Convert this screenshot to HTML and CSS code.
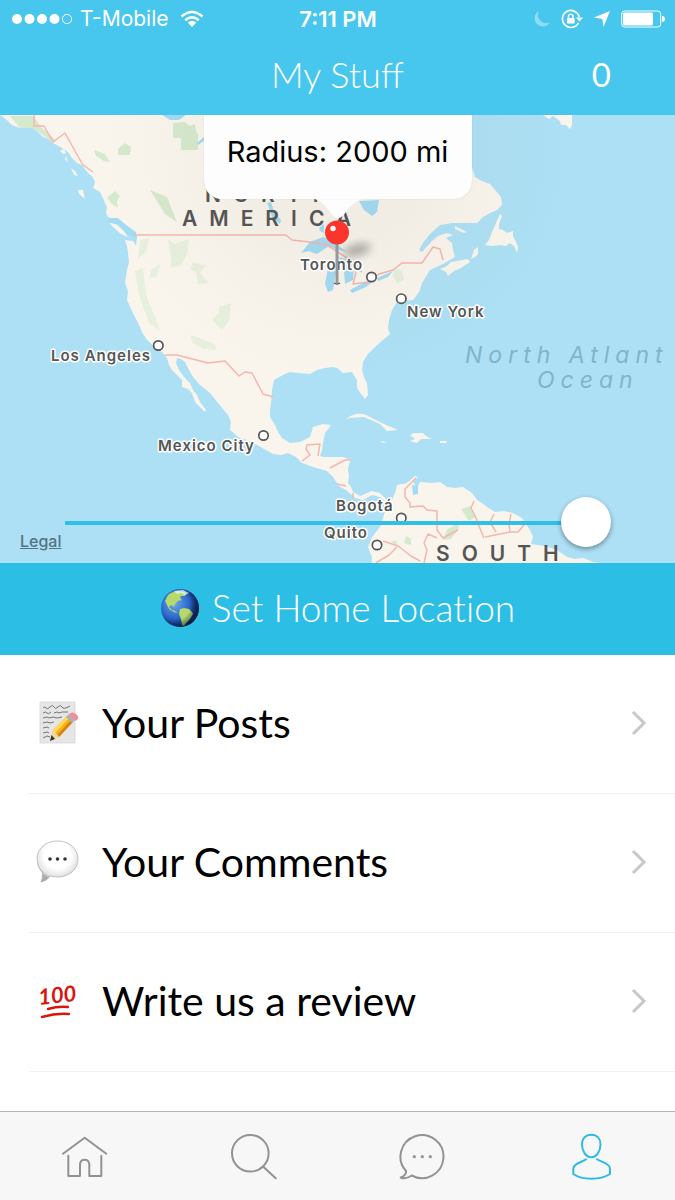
FILE: index.html
```html
<!DOCTYPE html>
<html lang="en">
<head>
<meta charset="utf-8">
<meta name="viewport" content="width=device-width, initial-scale=1">
<title>My Stuff</title>
<link rel="stylesheet" href="styles.css">
</head>
<body>
<header class="header">
  <div class="status">
    <div class="status-left">
      <svg class="signal" width="62" height="12" viewBox="0 0 62 12" aria-hidden="true">
        <g fill="#fff"><circle cx="6" cy="6" r="5"/><circle cx="18.500" cy="6" r="5"/><circle cx="31" cy="6" r="5"/><circle cx="43.500" cy="6" r="5"/></g>
        <circle cx="56" cy="6" r="4.600" fill="none" stroke="#fff"/>
      </svg>
      <span>T-Mobile</span>
      <svg class="wifi" width="24" height="18" viewBox="0 0 24 18" aria-hidden="true">
        <g fill="none" stroke="#fff" stroke-width="2.500"><path d="M1.500 6.500Q12-2.500 22.500 6.500"/><path d="M5.200 10.200Q12 4.300 18.800 10.200"/></g>
        <path fill="#fff" d="M7.700 12.600Q12 9 16.300 12.600L12 17z"/>
      </svg>
    </div>
    <span class="time">7:11 PM</span>
    <div class="status-right">
      <svg width="18" height="18" viewBox="0 0 18 18" aria-hidden="true"><path fill="#8edcf6" d="M6 1A8.200 8.200 0 1 0 17 12.200 8.200 8.200 0 0 1 6 1z"/></svg>
      <svg width="22" height="20" viewBox="0 0 22 20" aria-hidden="true">
        <path fill="none" stroke="#fff" stroke-width="1.600" d="M17.500 13.800A8.500 8.500 0 1 1 18.200 8"/>
        <path fill="#fff" d="M15 8.500h7l-3.500 4zM6 9h7.500v5.500H6z"/>
        <path fill="none" stroke="#fff" stroke-width="1.500" d="M7.500 9V7a2.300 2.300 0 0 1 4.500 0v2"/>
      </svg>
      <svg width="18" height="18" viewBox="0 0 18 18" aria-hidden="true"><path fill="#fff" d="M17 1 10.500 17 9.300 8.900 1 7.500z"/></svg>
      <svg width="44" height="18" viewBox="0 0 44 18" aria-hidden="true">
        <rect x=".7" y="1" width="39" height="16" rx="3" fill="none" stroke="#fff"/>
        <rect x="2" y="2.500" width="30" height="13" rx="1.500" fill="#fff"/><path fill="#fff" d="M41 6q3 0 3 3t-3 3z"/>
      </svg>
    </div>
  </div>
  <div class="navbar">
    <h1 class="title">My Stuff</h1>
    <span class="score">0</span>
  </div>
</header>

<main class="content">
  <section class="map" aria-label="Map">
    <svg class="map-art" viewBox="0 115 675 448">
      <defs>
        <radialGradient id="shade" gradientUnits="userSpaceOnUse" cx="338" cy="145" r="230"><stop offset=".4" stop-color="#84705c" stop-opacity=".06"/><stop offset="1" stop-color="#84705c" stop-opacity="0"/></radialGradient>
        <filter id="soft" x="-50%" y="-50%" width="200%" height="200%"><feGaussianBlur stdDeviation="4"/></filter>
      </defs>
      <rect y="115" width="675" height="448" fill="#ade0f5"/>
      <g class="land">
        <path d="M0 115L7 120 12 125 20 128 33 128 38 132 43 137 49 139 53 143 62 148 68 152 72 158 77 163 82 165 88 173 92 176 95 182 93 188 100 192 103 198 105 203 107 207 106 213 108 217 117 220 123 226 133 232 137 237 136 246 133 241 125 240 127 246 128 253 129 262 127 270 126 277 125 283 128 291 127 300 133 313 140 327 142 332 147 340 155 347 163 353 167 358 169 365 172 370 177 375 182 380 182 387 188 389 192 393 195 402 200 407 205 412 206 410 200 402 197 395 193 390 190 383 185 378 181 373 178 368 176 363 177 358 181 359 185 362 188 368 193 377 200 385 210 393 218 403 228 415 231 422 230 430 238 437 247 440 257 445 273 454 281 455 288 453 296 457 302 463 313 467 327 471 333 477 339 486 346 490 352 495 355 498 363 500 372 495 380 497 385 502 386 508 383 518 380 527 376 532 372 537 368 547 372 557 371 570 606 570 600 563 593 562 583 558 575 559 567 557 557 550 545 546 531 544 533 537 530 530 522 518 513 513 504 511 495 512 487 507 482 503 477 500 472 493 463 487 455 488 447 487 440 482 433 483 420 482 417 488 413 482 418 477 415 476 407 483 397 485 395 493 392 500 387 500 380 493 372 491 360 496 353 492 351 487 348 483 349 476 348 470 349 464 351 460 343 457 323 457 320 456 322 450 323 443 325 433 331 425 323 424 313 427 310 437 300 442 290 443 282 438 278 432 275 425 270 417 270 410 271 403 272 390 274 380 283 375 290 372 299 373 310 374 317 370 325 368 333 367 337 368 343 373 352 372 357 380 357 388 361 394 365 399 368 395 367 383 364 377 362 370 363 362 368 354 375 347 383 340 390 334 388 328 389 320 392 310 397 302 413 300 417 295 420 290 422 283 430 270 443 264 455 257 453 250 452 243 446 238 453 235 447 233 438 236 432 241 422 252 419 250 423 243 430 234 440 225 452 223 477 223 483 217 490 213 497 210 502 205 501 197 496 191 490 184 482 181 475 177 455 115z"/>
        <path d="M500 214l2 2-3 8 0 5 4 1 4 3 6-2 0 5 2 4 3 7-1 6-3-7-4-3-4 3-5-1-9 1-7-1 4-5 3-8zM440 269l7-3 4-4 6-1 11-2 2 3-9 6-7 3-6 5-2-4zM474 250l4-3 0 7-3 3-4 2zM455 226l12 6-3 1-9-4zM543 115l6 4 4-3 7 5 1 4 5 0 4 4 2-4 0-10z"/>
        <path d="M346 419q10-8 20-4l20 10 12 5-11 1-7-7-16-7-14 1zM410 435l4-2 9 0 3 3 6 3-11 0-4 4-7-2 5-2zM440 441l7 0-1 2-6 0zM380 441l7 1-4 1z"/>
        <path d="M60 151l4-2 2 4-3 1zM66 156l2 6-3-3zM71 168l4 3 3 5-4-1zM78 190l5 0 2 9-6-5zM106 219l10 5 7 6 5 7-7-3-8-7z"/>
      </g>
      <g fill="#d5e9cd">
        <path d="M10 116h23l9 12 14 12-3 3-10-8-10-7-13 0zM173 123l12-1 5 4 5-2 1 7 2 4v15h-17v-12h-8zM94 150l11 4 5 8-6-1-8-5zM118 149l7-6 6 4-1 8-12 0zM107 198l8-7 5 5-3 5 1 7-6-4zM150 190l17 7 10 25-12-8z"/>
        <path opacity=".5" d="M140 240l9-2-3 14-8 7zM168 239l7 5 6-2 8-3-2 15-6 11-10 3 0-12zM135 271l8-3 3 27 8 20 6 15-11-7-10-28zM192 262l10 3 4-1-6 9 9 10-11 1-2-12-5-2zM151 270l9-6-3 12-7 2zM219 307l12-4-2 18-7 9-10-10 7-8zM190 335l9 3 15 6 3 6-13-1-11-6zM395 268l7 3 2 9-7 3-4-7z"/>
        <path d="M461 509l9-3 5 11-6 4zM447 530l10-7 2 5-8 11-8 1zM406 536l5 3 0 6-7-2zM391 541l6 0-1 5z"/>
      </g>
      <g fill="#a2dbf5">
        <path d="M162 115h24l-7 5-9 0zM197 143l8-7 0 4-7 5zM267 203l4-1 3 10 7 8-1 4-8-7-3-9zM359 201l20-1-2 12-5 4-8-6zM301 253l9-11 13-5 9 4 15 11-12-3-6-3-12 8-9-3zM319 228l5-4 0 9-4-2zM328 268l8 4-3 18-5 2-3-8zM337 257l15 3 10 5 0 8-8-6-1 13-8 4-1-13 1-8zM350 290l15-8 10-2-9 7-14 6zM377 278l16-7-5 6-10 4zM412 485l6 1 0 8-5 1z"/>
        <path d="M108 218l10 0 8 7 10 7 1 6-10-4-8-9-12-3z"/>
      </g>
      <g class="borders">
        <path d="M34 115v11h10l9 16 12-9 10 18 8 14 10 7M134 235h152l6 5 26 3 9 2 20 13 5 9 4 5-3 12 16-2 10-8 14-4 9-7h20l11-16 7 2 3 11"/>
        <path d="M165 355h12l31 8 17-2 14 15 6-4 7 1 11 21 10 3M302 461l8-6-4-6 1-4 13-1-2 12M330 468l15-8 6 0M337 484l9 2M353 493v5"/>
        <path d="M416 478l-11 11 0 8 5 6 0 4 13-1 4 4 10 1 0 19 6 8 15-8M474 501l-3 7 5 10 3 8 5 12M494 514l-4 8 6 10M511 514l-2 10 1 8-25 5M524 525l-6 7h-8M383 541l15 5 13 10 9 5M397 547l-8 8-13 8M424 563l3-13-3-7 4-9 9 4"/>
      </g>
      <rect y="115" width="675" height="448" fill="url(#shade)"/>
      <g class="continent">
        <text x="205" y="202">NORTH</text>
        <text x="182" y="226">AMERICA</text>
        <text x="436" y="561">SOUTH</text>
      </g>
      <g class="ocean"><text x="465" y="363">North Atlant</text><text x="537" y="388">Ocean</text></g>
      <g class="city">
        <text x="300" y="270">Toronto</text><text x="407" y="317">New York</text><text x="51" y="361">Los Angeles</text><text x="158" y="451">Mexico City</text><text x="336" y="511">Bogotá</text><text x="324" y="538">Quito</text>
      </g>
      <g class="dots"><circle cx="371.500" cy="277" r="4.700"/><circle cx="401.300" cy="298.700" r="4.700"/><circle cx="158.300" cy="345.500" r="4.700"/><circle cx="263.500" cy="435.500" r="4.700"/><circle cx="401.300" cy="518" r="4.700"/><circle cx="377" cy="545" r="4.700"/></g>
      <ellipse cx="357" cy="250" rx="14" ry="6" fill="#555" opacity=".45" filter="url(#soft)" transform="rotate(-15 357 250)"/>
      <path fill="#fdfdfe" d="M312 198c8 2 14 8 18 14q8 12 16 0c4-6 10-12 20-14z"/>
      <path d="M337 241v42" stroke="#989898" stroke-width="3"/><path d="M334 283q3 2 6 0" fill="none" stroke="#555" stroke-width="1.500"/>
      <circle cx="337" cy="232.500" r="12" fill="#fb352c"/><circle cx="333" cy="228.500" r="2.700" fill="#fff"/>
    </svg>
    <div class="callout">Radius: 2000 mi</div>
    <a class="legal" href="#legal">Legal</a>
    <input class="radius" type="range" min="0" max="2000" value="2000" aria-label="Radius in miles">
  </section>

  <button class="set-home" type="button">
    <svg width="40" height="40" viewBox="0 0 40 40" aria-hidden="true">
      <defs>
        <radialGradient id="globe" cx=".36" cy=".38" r=".68"><stop offset="0" stop-color="#6aa9ed"/><stop offset=".55" stop-color="#2c68c9"/><stop offset="1" stop-color="#092158"/></radialGradient>
        <radialGradient id="night" cx=".35" cy=".4" r=".7"><stop offset=".6" stop-color="#001333" stop-opacity="0"/><stop offset="1" stop-color="#001333" stop-opacity=".75"/></radialGradient>
      </defs>
      <circle cx="20" cy="20" r="19" fill="url(#globe)"/>
      <path fill="#b5d96b" d="M8 7q5-4 11-4l7 2-1 3-4 0-1 2 2 2-4 1-3 3-1 3-3-2-2 2 3 3 3 1 3 2-4-1-5-3-2-4-2-4zM20 21l4-1 5 1 3 3 1 2-3 5-3 3-3 4-2-1-1-6-2-5z"/>
      <path fill="#e6f4ee" opacity=".8" d="M14 3l9-1 6 3-4 2-4-2-4 1z"/>
      <circle cx="20" cy="20" r="19" fill="url(#night)"/>
    </svg>
    <span>Set Home Location</span>
  </button>

  <nav class="list" aria-label="My stuff">
    <a class="row" href="#posts">
      <svg class="row-icon" viewBox="0 0 44 44" aria-hidden="true">
        <path fill="#e6e6e6" stroke="#d2d2d2" stroke-width=".7" d="M5 1h35v41H5z"/>
        <g fill="none" stroke="#666" stroke-width=".9"><path d="M8 7q2-2 3 0t4-1 4 0 4 0 4 0 8-1"/><path d="M8 12q3-2 4 0t4-1M19 12l3-1 2 1 3-1 6 0"/><path d="M8 17l4-1 2 1 4-1 4 1 5-1"/><path d="M8 22l4-1 3 1 4-1"/><path d="M8 27l4-1 2 1"/><path d="M8 32l4-1 2 1M8 37l4-2 3 1"/></g>
        <path fill="#f7b51c" d="M18 29 32 15l6 6-14 15-8 3z"/>
        <path fill="#ffda56" d="M18 29 32 15l2 2-14 15z"/><path fill="#d98310" d="M36 19l2 2-14 15-2-2z"/>
        <path fill="#f1d8a6" d="M18 29l6 7-8 3z"/><path fill="#333" d="M16.500 34l3.500 4-5 2z"/>
        <path fill="#aab0b5" d="M31 16l3-3 6 6-3 3z"/><path fill="#ef8f9a" d="M34 13q3-3 7 0t1 6l-2 1z"/>
      </svg>
      <span class="row-label">Your Posts</span>
      <svg class="chevron" viewBox="0 0 16 26" aria-hidden="true"><path d="M2 2l11 11L2 24"/></svg>
    </a>
    <a class="row" href="#comments">
      <svg class="row-icon" viewBox="0 0 44 44" aria-hidden="true">
        <defs><radialGradient id="bubble" cx=".5" cy=".35" r=".6"><stop offset=".55" stop-color="#fff"/><stop offset=".85" stop-color="#e5e5e5"/><stop offset="1" stop-color="#ababab"/></radialGradient></defs>
        <path fill="url(#bubble)" stroke="#aaa" stroke-width=".7" d="M22.500 1C34 1 43 8.500 43 19s-9 18-20.500 18q-4 0-7-1-4 5-9.500 6 2-4 1.500-9Q2 27 2 19C2 8.500 11 1 22.500 1z"/>
        <g fill="#333"><circle cx="15" cy="19" r="1.800"/><circle cx="22.500" cy="19" r="1.800"/><circle cx="30" cy="19" r="1.800"/></g>
      </svg>
      <span class="row-label">Your Comments</span>
      <svg class="chevron" viewBox="0 0 16 26" aria-hidden="true"><path d="M2 2l11 11L2 24"/></svg>
    </a>
    <a class="row" href="#review">
      <svg class="row-icon" viewBox="0 0 44 44" aria-hidden="true">
        <g transform="rotate(-6 22 16)"><text class="hundred" x="3" y="24">100</text></g>
        <path fill="none" stroke="#d9150f" stroke-width="2.500" stroke-linecap="round" d="M13 30q10-3 20-2M7 38q14-4 27-3"/>
      </svg>
      <span class="row-label">Write us a review</span>
      <svg class="chevron" viewBox="0 0 16 26" aria-hidden="true"><path d="M2 2l11 11L2 24"/></svg>
    </a>
  </nav>
</main>

<nav class="tabs" aria-label="Main">
  <a class="tab" href="#home" aria-label="Home"><svg viewBox="0 0 48 48"><path d="M3 20.700 24.700 4.700 46.300 20.700M8.300 22.700V43H20V31a4.700 5 0 0 1 9.300 0V43h12V22.700"/></svg></a>
  <a class="tab" href="#search" aria-label="Search"><svg viewBox="0 0 48 48"><circle cx="21.300" cy="20.300" r="18.300"/><path d="M34.300 33.700 46.700 45.300"/></svg></a>
  <a class="tab" href="#chat" aria-label="Messages"><svg viewBox="0 0 48 48"><path d="M8 38A21.500 21.500 0 1 1 13.700 42.500C10 45 6 46 2.700 44.500 6 43.500 8.500 40.500 8 38"/><g class="tab-dots"><circle cx="16.300" cy="23.700" r="1.600"/><circle cx="24.300" cy="23.700" r="1.600"/><circle cx="32.300" cy="23.700" r="1.600"/></g></svg></a>
  <a class="tab tab-active" href="#me" aria-label="My Stuff" aria-current="page"><svg viewBox="0 0 48 48"><path d="M24.300 1.800C30 1.800 33.500 5.500 33.500 11.500S30 24.300 24.300 24.300 15 17.500 15 11.500 18.500 1.800 24.300 1.800zM19 26.300C16 29 6.300 30 6.300 35.500V41Q13 45.700 24.300 45.700T43 41V35.500C43 30 33.500 29 30 26.300"/></svg></a>
</nav>
</body>
</html>
```
FILE: styles.css
```css
* {
  box-sizing: border-box;
}

body {
  margin: 0;
  min-height: 100vh;
  display: flex;
  flex-direction: column;
  background: #fff;
  font-family: Lato, sans-serif;
  color: #000;
}

a {
  color: inherit;
  text-decoration: none;
}

svg {
  display: block;
  flex-shrink: 0;
}

.header {
  height: 115px;
  background: #47c6ee;
  color: #fff;
}

.status {
  display: grid;
  grid-template-columns: 1fr auto 1fr;
  align-items: center;
  height: 37px;
  padding: 0 10px 0 11px;
  font: 21px/26px Inter, sans-serif;
}

.status-left,
.status-right {
  display: flex;
  align-items: center;
}

.status-left {
  gap: 7px;
}

.wifi {
  margin-left: 4px;
}

.time {
  font-size: 22px;
  font-weight: 600;
}

.status-right {
  justify-content: flex-end;
  gap: 10px;
}

.navbar {
  display: grid;
  grid-template-columns: 1fr auto 1fr;
  align-items: center;
  height: 74px;
}

.title {
  grid-column: 2;
  margin: 0;
  font-size: 36px;
  font-weight: 300;
}

.score {
  justify-self: end;
  padding-right: 64px;
  font-size: 33px;
}

.content {
  flex: 1;
}

.map {
  position: relative;
}

.map-art {
  width: 100%;
  height: auto;
  font-family: Inter, sans-serif;
}

.land {
  fill: #f9f5ed;
}

.borders {
  fill: none;
  stroke: #f4b6ac;
  stroke-width: 1.5;
  stroke-linejoin: round;
}

.continent {
  fill: #555;
  font-size: 21px;
  font-weight: 600;
  letter-spacing: 12px;
}

.ocean {
  fill: #7fb5ca;
  font-size: 23px;
  font-style: italic;
  letter-spacing: 6px;
}

.city {
  fill: #555;
  stroke: #fff;
  stroke-width: 3px;
  stroke-linejoin: round;
  paint-order: stroke;
  font-size: 15px;
  font-weight: 600;
  letter-spacing: 1px;
}

.dots {
  fill: #fff;
  stroke: #555;
  stroke-width: 1.7;
}

.callout {
  position: absolute;
  top: 0;
  left: 50%;
  width: 268px;
  height: 84px;
  transform: translateX(-50%);
  border-radius: 0 0 18px 18px;
  background: #fdfdfe;
  box-shadow: 0 0 1px #8888;
  clip-path: inset(0 -2px -2px);
  text-align: center;
  font: 29px/73px Inter, sans-serif;
}

.legal {
  position: absolute;
  left: 20px;
  bottom: 11px;
  color: #54737f;
  font: 500 16px/22px Inter, sans-serif;
  text-decoration: underline;
}

.radius {
  position: absolute;
  left: 65px;
  right: 64px;
  bottom: 16px;
  width: calc(100% - 129px);
  height: 50px;
  margin: 0;
  appearance: none;
  background: linear-gradient(#2fbfe8, #2fbfe8) center 24px / 100% 4px no-repeat;
}

.radius::-webkit-slider-thumb {
  appearance: none;
  width: 50px;
  height: 50px;
  border-radius: 50%;
  background: #fff;
  box-shadow: 0 2px 5px #0006;
}

.set-home {
  display: flex;
  align-items: center;
  justify-content: center;
  gap: 12px;
  width: 100%;
  height: 92px;
  padding: 0 0 2px;
  border: 0;
  background: #2dbee6;
  color: #fff;
  font: 300 37px/48px Lato, sans-serif;
  font-variant-ligatures: none;
}

.row {
  display: flex;
  align-items: center;
  height: 139px;
  margin-left: 29px;
  padding: 0 28px 3px 6px;
  border-bottom: 1px solid #f0f0f0;
}

.row-icon {
  width: 44px;
  height: 44px;
}

.row-label {
  flex: 1;
  padding-left: 23px;
  font-size: 41px;
}

.hundred {
  fill: #d9150f;
  font: italic 700 22px Lato, sans-serif;
}

.chevron {
  width: 16px;
  height: 26px;
  fill: none;
  stroke: #c7c7cc;
  stroke-width: 3;
}

.tabs {
  position: sticky;
  bottom: 0;
  display: grid;
  grid-template-columns: repeat(4, 1fr);
  height: 89px;
  border-top: 1px solid #b2b5b5;
  background: #f7f7f7;
}

.tab {
  display: flex;
  align-items: center;
  justify-content: center;
  padding-top: 2px;
  color: #929292;
}

.tab svg {
  width: 48px;
  height: 48px;
  fill: none;
  stroke: currentColor;
  stroke-width: 2;
  stroke-linecap: round;
  stroke-linejoin: round;
}

.tab .tab-dots {
  fill: currentColor;
  stroke: none;
}

.tab-active {
  color: #2dbbe2;
}
```
